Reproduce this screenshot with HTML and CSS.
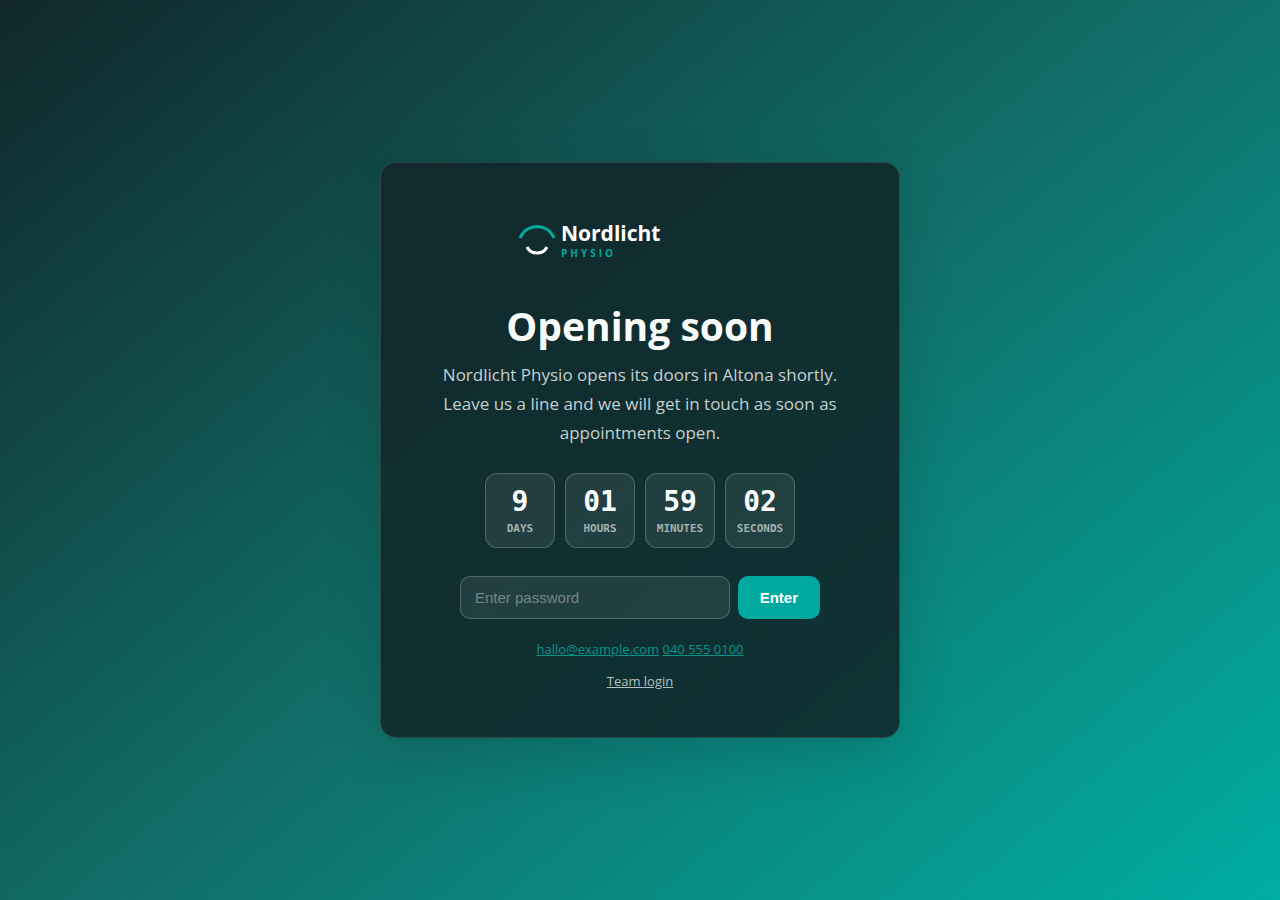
FILE: index.html
```
<!DOCTYPE html>
<html lang="en">
<head>
  <meta charset="UTF-8">
  <meta name="viewport" content="width=device-width, initial-scale=1">
  <title>Nordlicht Physio - Opening soon</title>
  <link rel="stylesheet" href="styles.css">
</head>
<body>

  <main class="card">
    <svg class="logo" viewBox="0 0 240 60" role="img" aria-label="Nordlicht Physio">
      <path d="M0 27C7 11.500 27 11.500 34 27" fill="none" stroke="#00a99d" stroke-width="3"/>
      <path d="M7 36C11 44 23 44 27 36" fill="none" stroke="#fff" stroke-width="3"/>
      <text class="logo-name" x="41" y="30">Nordlicht</text>
      <text class="logo-sub" x="41" y="46">PHYSIO</text>
    </svg>

    <h1>Opening soon</h1>
    <p class="intro">Nordlicht Physio opens its doors in Altona shortly. Leave us a line and we will get in touch as soon as appointments open.</p>

    <div class="countdown">
      <div class="unit"><span class="num">9</span><span class="label">Days</span></div>
      <div class="unit"><span class="num">01</span><span class="label">Hours</span></div>
      <div class="unit"><span class="num">59</span><span class="label">Minutes</span></div>
      <div class="unit"><span class="num">02</span><span class="label">Seconds</span></div>
    </div>

    <form class="unlock">
      <input type="password" name="password" placeholder="Enter password" aria-label="Enter password">
      <button type="submit">Enter</button>
    </form>

    <p class="contact"><a href="mailto:hallo@example.com">hallo@example.com</a> <a href="tel:+49405550100">040 555 0100</a></p>
    <p class="team"><a href="#login">Team login</a></p>
  </main>

</body>
</html>
```
FILE: styles.css
```
* { box-sizing: border-box; }
body {
  margin: 0;
  min-height: 100vh;
  display: flex;
  align-items: center;
  justify-content: center;
  padding: 24px;
  font-family: "Segoe UI", "Open Sans", "Noto Sans", sans-serif;
  color: #fafcfb;
  background: linear-gradient(140deg, #10262a 0%, #106e66 50%, #00ada2 100%);
}
.card {
  width: 100%;
  max-width: 520px;
  padding: 48px 56px 46px;
  text-align: center;
  background: rgba(16, 38, 41, 0.88);
  border: 1px solid rgba(255, 255, 255, 0.12);
  border-radius: 16px;
  box-shadow: 0 16px 56px rgba(0, 0, 0, 0.14);
}
.logo { display: block; width: 240px; height: 60px; margin: 0 auto 32px; overflow: visible; }
.logo-name { font-size: 21px; font-weight: 700; fill: #fff; }
.logo-sub { font-size: 10px; font-weight: 700; letter-spacing: 3px; fill: #00a99d; }
h1 { margin: 0 0 12px; font-size: 39px; line-height: 45px; font-weight: 700; }
.intro { margin: 0 0 26px; font-size: 17px; line-height: 29px; color: #c6d0cf; }
.countdown { display: flex; justify-content: center; gap: 10px; margin-bottom: 28px; }
.unit {
  width: 70px;
  padding: 12px 0;
  background: rgba(255, 255, 255, 0.08);
  border: 1px solid rgba(255, 255, 255, 0.22);
  border-radius: 12px;
  font-family: Consolas, "DejaVu Sans Mono", monospace;
  font-weight: 700;
}
.num, .label { display: block; }
.num { font-size: 28px; line-height: 32px; }
.label { margin-top: 4px; font-size: 11px; line-height: 13px; text-transform: uppercase; color: #a5b2b2; }
.unlock { display: flex; gap: 8px; max-width: 360px; margin: 0 auto 20px; }
.unlock input {
  flex: 1;
  min-width: 0;
  padding: 12px 14px;
  font: 15px/17px "Liberation Sans", Arial, sans-serif;
  color: #fff;
  background: rgba(255, 255, 255, 0.08);
  border: 1px solid rgba(255, 255, 255, 0.22);
  border-radius: 10px;
}
.unlock input::placeholder { color: #758686; }
.unlock button {
  padding: 12px 22px;
  font: 700 15px/19px "Liberation Sans", Arial, sans-serif;
  color: #fff;
  background: #00a99d;
  border: none;
  border-radius: 10px;
  cursor: pointer;
}
.contact, .team { margin: 0; font-size: 13px; line-height: 20px; }
.contact a { color: #089488; }
.team { margin-top: 12px; }
.team a { color: #b4c0bf; }
```
